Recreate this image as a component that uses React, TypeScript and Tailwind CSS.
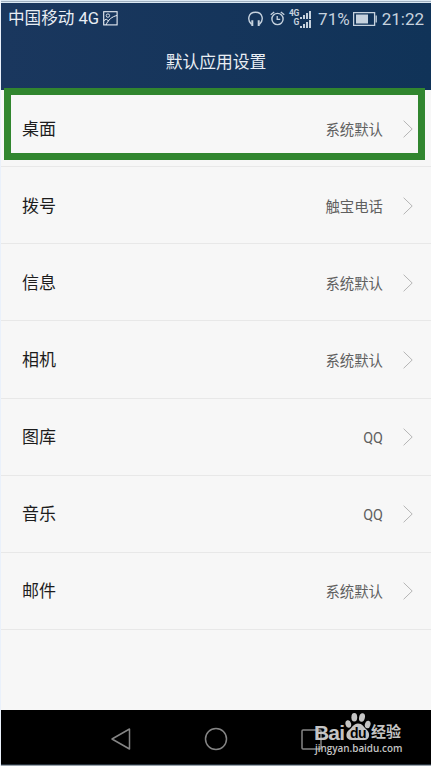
import React from "react";

const items = [
  { name: "桌面", value: "系统默认", box: "h-[77px] pt-[2px]" },
  { name: "拨号", value: "触宝电话", box: "h-[77px] pt-[2px]" },
  { name: "信息", value: "系统默认", box: "h-[77px] pt-[2px]" },
  { name: "相机", value: "系统默认", box: "h-[78px] pt-[1px]" },
  { name: "图库", value: "QQ", box: "h-[77px]" },
  { name: "音乐", value: "QQ", box: "h-[77px]" },
  { name: "邮件", value: "系统默认", box: "h-[77px]" },
];

function PictureIcon() {
  return (
    <svg width="15" height="15" viewBox="0 0 15 15" fill="none" stroke="currentColor">
      <rect x="0.7" y="0.7" width="13.4" height="13.2" strokeWidth="1.1" />
      <circle cx="4.9" cy="4.6" r="1.7" strokeWidth="0.9" />
      <path d="M1 9.5 3.2 8.2 6 10.2M3 14C5 9 9 5.5 14 4.5" strokeWidth="1" />
    </svg>
  );
}

function HeadphoneIcon() {
  return (
    <svg width="15" height="16" viewBox="0 0 15 16" fill="none" stroke="currentColor">
      <path d="M3.6 13.4C-.9 9.8-.2 1.2 7.5 1.2s8.4 8.6 3.9 12.2" strokeWidth="1.4" />
      <path d="M4.3 9.3v5.6M10.7 9.3v5.6" strokeWidth="2" />
    </svg>
  );
}

function AlarmIcon() {
  return (
    <svg width="15" height="15" viewBox="0 0 15 15" fill="none" stroke="currentColor">
      <circle cx="7.5" cy="8" r="5.6" strokeWidth="1.4" />
      <path d="M.7 3.7 4.2.9M14.3 3.7 10.8.9" strokeWidth="1.3" />
      <path d="M7.2 5v3.4h3" strokeWidth="1.3" />
    </svg>
  );
}

function Signal({ label }: { label: string }) {
  return (
    <div className="flex h-[9px] items-end justify-end">
      <span className="relative top-[-1px] text-[8.5px] leading-[10px] font-bold tracking-[-0.3px]">{label}</span>
      <svg width="12" height="8" viewBox="0 0 12 8" fill="currentColor">
        <path d="M1 6h2v2H1zM4 4h2v4H4zM7 2h2v6H7zM10 0h2v8h-2z" />
      </svg>
    </div>
  );
}

function BatteryIcon() {
  return (
    <svg width="24" height="14" viewBox="0 0 24 14" fill="none" stroke="currentColor">
      <rect x="0.6" y="0.6" width="21" height="12.8" strokeWidth="1.3" />
      <path d="M3 2.5h12v9H3z" fill="currentColor" stroke="none" />
      <path d="M23.2 3.5v7" strokeWidth="1.3" />
    </svg>
  );
}

function Watermark() {
  return (
    <div className="absolute top-[2px] left-[313px] h-[46px] w-[94px] text-[#c4c4c4]">
      <svg width="26" height="29" viewBox="0 0 26 29" className="absolute top-0 left-[31px]" fill="currentColor">
        <ellipse cx="3.3" cy="12" rx="2.8" ry="3.8" transform="rotate(-15 3.3 12)" />
        <ellipse cx="9.3" cy="5.3" rx="2.9" ry="4.3" />
        <ellipse cx="17" cy="5.5" rx="2.9" ry="4.3" transform="rotate(12 17 5.5)" />
        <ellipse cx="22.7" cy="12.5" rx="2.8" ry="3.8" transform="rotate(15 22.7 12.5)" />
        <path d="M13 11.5c4.5 0 5.5 3.5 8.5 6 4 3.5 3.5 10.5-2 10.5H6.5C.5 28 0 21 4 18c3.5-2.500 4.500-6.500 9-6.500z" />
      </svg>
      <span className="absolute top-[12px] left-0 font-['Liberation_Sans'] text-[21px] leading-[18px] font-bold tracking-[-0.8px]">
        Bai
      </span>
      <span className="absolute top-[13px] left-[36px] font-['Liberation_Sans'] text-[14px] leading-[16px] font-bold tracking-[-0.5px] text-black">
        du
      </span>
      <span className="absolute top-[11px] left-[57px] text-[15px] leading-[19px] font-bold whitespace-nowrap">
        经验
      </span>
      <span className="absolute top-[31px] left-[1px] font-['Open_Sans'] text-[9.9px] leading-[10px] font-semibold whitespace-nowrap">
        jingyan.baidu.com
      </span>
    </div>
  );
}

export default function App() {
  return (
    <div className="flex h-[766px] w-[431px] flex-col overflow-hidden border-l border-[#eaf1fb] bg-[#f7f7f7] font-[Roboto,'Noto_Sans_CJK_SC',sans-serif]">
      <div className="flex h-[3px] shrink-0 flex-col justify-center bg-[#dbe8f3]">
        <div className="h-px bg-[#9fb0c0]" />
      </div>

      {/* Шапка */}
      <header className="h-[87px] shrink-0 bg-linear-to-r from-[#1a375e] to-[#103358] text-[#e9eef4]">
        <div className="flex h-[31px] items-center justify-between pr-[7px] pl-[7px]">
          <div className="flex items-center">
            <span className="text-[16.6px] leading-[20px] whitespace-nowrap">中国移动 4G</span>
            <span className="ml-[4px]">
              <PictureIcon />
            </span>
          </div>
          <div className="flex items-center text-[#c6d2de]">
            <HeadphoneIcon />
            <span className="ml-[7px]">
              <AlarmIcon />
            </span>
            <div className="ml-[3px] flex w-[23px] flex-col">
              <Signal label="4G" />
              <Signal label="G" />
            </div>
            <span className="ml-[7px] text-[17px] leading-[20px]">71%</span>
            <span className="ml-[3px]">
              <BatteryIcon />
            </span>
            <span className="ml-[5px] text-[17px] leading-[20px]">21:22</span>
          </div>
        </div>
        <h1 className="flex h-[56px] items-center justify-center pt-[1px] text-[16.8px]">默认应用设置</h1>
      </header>

      {/* Список */}
      <main className="relative h-[620px] shrink-0">
        {items.map((item) => (
          <div
            key={item.name}
            className={`flex items-center border-b border-[#e8e8e8] pr-[18px] pl-[21px] ${item.box}`}
          >
            <span className="pt-[2px] text-[17px] text-[#1d1d1d]">{item.name}</span>
            <span className="ml-auto pt-[4px] text-[14.4px] text-[#5f5f5f]">{item.value}</span>
            <svg width="10" height="18" viewBox="0 0 10 18" fill="none" className="ml-[20px]">
              <path d="M.6.7 9.2 9 .6 17.3" stroke="#b5b5b5" strokeWidth="1" />
            </svg>
          </div>
        ))}
        <div className="absolute top-[-2px] left-[3px] h-[72px] w-[421px] border-[7px] border-[#31862f]" />
      </main>

      {/* Навигация */}
      <nav className="relative flex h-[54px] shrink-0 items-center bg-black pt-[4px] pl-[110px] text-[#858585]">
        <svg width="20" height="23" viewBox="0 0 20 23" fill="none" stroke="currentColor" strokeWidth="1.5">
          <path d="M1 11 18.5 1v20z" strokeLinejoin="round" />
        </svg>
        <svg width="24" height="24" viewBox="0 0 24 24" fill="none" stroke="currentColor" strokeWidth="1.5" className="ml-[73px]">
          <circle cx="12" cy="12" r="10.5" />
        </svg>
        <svg width="21" height="21" viewBox="0 0 21 21" fill="none" stroke="currentColor" strokeWidth="1.5" className="ml-[73px]">
          <rect x="1" y="1" width="19" height="19" rx="1" />
        </svg>
        <Watermark />
      </nav>
      <div className="h-[2px] shrink-0 border-t border-[#26303a] bg-[#9aa3ab]" />
    </div>
  );
}
